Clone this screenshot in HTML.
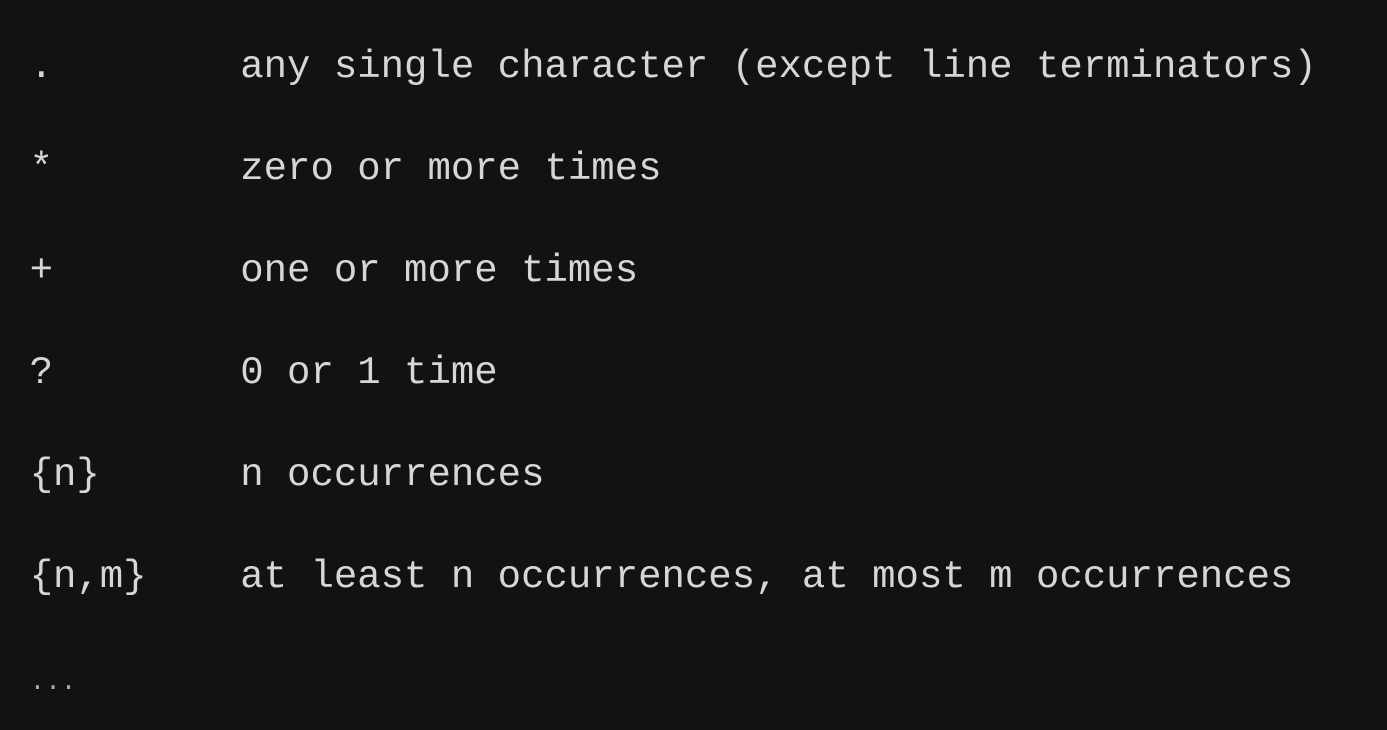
<!DOCTYPE html>
<html><head><style>
html,body{margin:0;padding:0;background:#111212;width:1387px;height:730px;overflow:hidden}
pre{margin:0;padding:16px 0 0 29.6px;font-family:"Liberation Mono",monospace;font-size:39px;line-height:102px;color:#d6d6d6}
</pre>
</style></head><body>
<pre>.        any single character (except line terminators)
*        zero or more times
+        one or more times
?        0 or 1 time
{n}      n occurrences
{n,m}    at least n occurrences, at most m occurrences
<span style="font-size:26px;color:#aaa">...</span></pre>
</body></html>
